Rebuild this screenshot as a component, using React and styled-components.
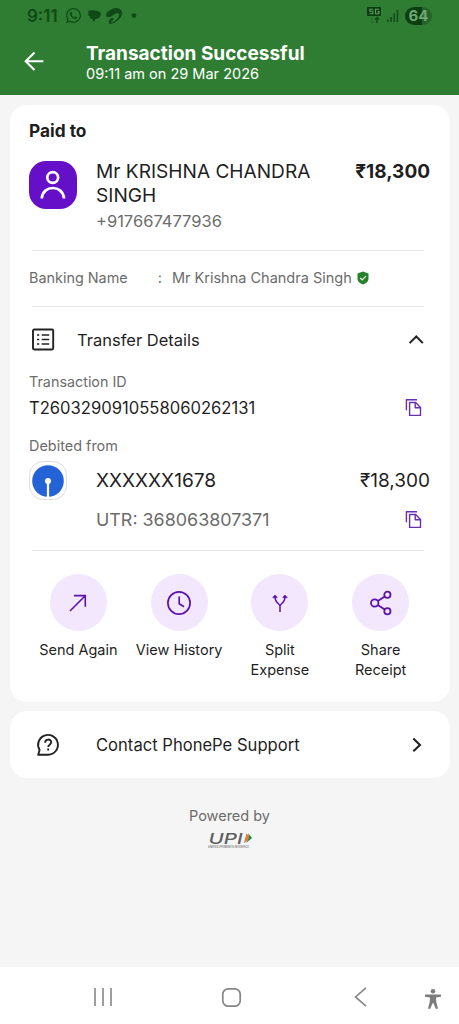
import React from "react";
import styled, { createGlobalStyle } from "styled-components";
import { FaWhatsapp } from "react-icons/fa";
import { SiAirtel } from "react-icons/si";

const GlobalStyle = createGlobalStyle`
  * { box-sizing: border-box; }
  body { margin: 0; background: #f5f5f5; font-family: Inter, "Noto Sans", sans-serif; color: #1f1f1f; }
  svg { display: block; flex: none; }
`;

const Screen = styled.div`
  display: flex;
  flex-direction: column;
  height: 1024px;
  width: 459px;
  overflow: hidden;
`;

const Header = styled.header`
  height: 95px;
  background: #2e7d32;
  color: #fff;
`;

const StatusBar = styled.div`
  height: 31px;
  display: flex;
  align-items: center;
  padding: 0 27px;
  color: #0f4a16;
`;

const StatusIcons = styled.div`
  display: flex;
  align-items: center;
  gap: 4px;
  margin-left: ${(p) => (p.$end ? "auto" : "7px")};
`;

const Battery = styled.div`
  width: 27px;
  height: 18px;
  margin-left: 2px;
  border-radius: 9px;
  background: linear-gradient(90deg, #0b3f10 62%, #23642a 62%);
  color: #6fa673;
  font-size: 15px;
  font-weight: 700;
  line-height: 18px;
  text-align: center;
`;

const AppBar = styled.div`
  display: flex;
  align-items: flex-start;
  padding: 11px 24px 0;
`;

const TitleBlock = styled.div`
  margin-left: 42px;
`;

const Text = styled.div`
  margin: 0;
  font-size: ${(p) => p.$size}px;
  font-weight: ${(p) => p.$weight || 400};
  line-height: ${(p) => p.$lh || 20}px;
  color: ${(p) => (p.$muted ? "#6c6c6c" : "inherit")};
  white-space: nowrap;
`;

const Main = styled.main`
  flex: 1;
  padding: 10px 9.5px;
`;

const Card = styled.section`
  background: #fff;
  border-radius: 17px;
  padding: 16px 19.5px 22px;
`;

const SupportCard = styled(Card)`
  height: 67px;
  margin-top: 9px;
  padding: 0 26.5px 0 25px;
  display: flex;
  align-items: center;
`;

const Row = styled.div`
  display: flex;
  align-items: ${(p) => p.$align || "center"};
  margin-top: ${(p) => p.$mt || 0}px;
  padding-right: ${(p) => p.$pr || 0}px;
`;

const Grow = styled.div`
  flex: 1;
  margin-left: ${(p) => p.$ml || 0}px;
`;

const Stack = styled.div`
  margin-top: ${(p) => p.$mt || 0}px;
`;

const Avatar = styled.div`
  width: 48px;
  height: 48px;
  margin-top: 2px;
  border-radius: 17px;
  background: #650fc8;
`;

const BankBadge = styled.div`
  width: 38px;
  height: 39px;
  border: 1px solid #dedede;
  border-radius: 14px;
  display: grid;
  place-items: center;
`;

const Divider = styled.hr`
  height: 1px;
  border: 0;
  margin: ${(p) => p.$mt}px 6px 0 3px;
  background: #e8e8e8;
`;

const Actions = styled.div`
  display: grid;
  grid-template-columns: repeat(4, 1fr);
  margin: 23px -1px 0;
`;

const Action = styled.div`
  display: flex;
  flex-direction: column;
  align-items: center;
  text-align: center;
`;

const ActionCircle = styled.div`
  width: 57px;
  height: 57px;
  margin-bottom: 9px;
  border-radius: 50%;
  background: #f2e7fc;
  display: grid;
  place-items: center;
`;

const Powered = styled.footer`
  margin-top: 28px;
  display: flex;
  flex-direction: column;
  align-items: center;
`;

const NavBar = styled.nav`
  height: 57px;
  background: #fff;
  display: flex;
  align-items: center;
  padding: 3px 17px 0 93px;
`;

const NavItem = styled.div`
  margin-left: ${(p) => p.$ml || 0}px;
  margin-top: ${(p) => p.$mt || 0}px;
`;

const PURPLE = "#5a14ad";
const NAV_GREY = "#868686";

const CopyIcon = () => (
  <svg width="18" height="20" viewBox="0 0 18 20" fill="none" stroke="#6a2fb0" strokeWidth="1.4" strokeLinejoin="round">
    <path d="M1.400 12.300V1.700H12" />
    <path d="M4.600 4.500h6l4.900 4.900v8H4.600z" />
    <path d="M10.200 4.500v5.200h5.200" />
  </svg>
);

const SendIcon = () => (
  <svg width="24" height="24" viewBox="0 0 24 24" fill="none" stroke={PURPLE} strokeWidth="1.6">
    <path d="M4 20L19.200 4.700M8 4.600h11.300v11.200" />
  </svg>
);

const ClockIcon = () => (
  <svg width="26" height="26" viewBox="0 0 26 26" fill="none" stroke={PURPLE} strokeWidth="1.7">
    <circle cx="13" cy="13" r="11.100" />
    <path d="M13.200 6.600v7.200l4.800 2.900" />
  </svg>
);

const SplitIcon = () => (
  <svg width="20" height="22" viewBox="0 0 20 22" fill="none" stroke={PURPLE} strokeWidth="1.5">
    <path d="M10 20v-6C9.800 11.500 5 11.500 5 4.500M10 14C10.200 11.500 15 11.500 15 4.500" />
    <path d="M2.800 5.600L5 3.100l2.200 2.500zM12.800 5.600L15 3.100l2.200 2.500z" fill={PURPLE} strokeWidth="0.8" />
  </svg>
);

const ShareIcon = () => (
  <svg width="24" height="26" viewBox="0 0 24 26" fill="none" stroke={PURPLE} strokeWidth="1.8">
    <circle cx="5.700" cy="13" r="3.700" />
    <circle cx="18.400" cy="4.800" r="3.100" />
    <circle cx="18.400" cy="21.200" r="3.100" />
    <path d="M8.800 11L15.800 6.500M8.800 15L15.800 19.500" />
  </svg>
);

const UpiLogo = () => (
  <svg width="46" height="28" viewBox="0 -6 46 28" fontFamily="Inter, sans-serif">
    <text x="1.500" y="11.500" fontSize="14.500" fontWeight="500" fontStyle="italic" fill="#5f5f5f" textLength="34" lengthAdjust="spacingAndGlyphs">UPI</text>
    <path d="M39.500 1.200L43.500 6 36.800 11.200z" fill="#e8793a" />
    <path d="M41.300 1.200L45 6 38.700 11.200 42 6z" fill="#1d8a45" />
    <text x="1" y="15.600" fontSize="2.800" fontWeight="600" fontStyle="italic" fill="#777" textLength="41" lengthAdjust="spacingAndGlyphs">UNIFIED PAYMENTS INTERFACE</text>
  </svg>
);

const ACTIONS = [
  { icon: <SendIcon />, lines: ["Send Again"] },
  { icon: <ClockIcon />, lines: ["View History"] },
  { icon: <SplitIcon />, lines: ["Split", "Expense"] },
  { icon: <ShareIcon />, lines: ["Share", "Receipt"] },
];

export default function App() {
  return (
    <Screen>
      <GlobalStyle />
      <Header>
        <StatusBar>
          <Text $size={17} $weight={600}>9:11</Text>
          <StatusIcons>
            <FaWhatsapp size={17} />
            <svg width="16" height="16" viewBox="0 0 16 16" fill="currentColor">
              <path d="M1.800 3C5 1.600 11.500 2 14.300 4.300c1.600 3-.8 6.300-4.800 6.700L8 14 6.300 11 3.800 10.300 4 8 1.500 7.300 2.800 5.500z" />
            </svg>
            <SiAirtel size={16} />
            <svg width="16" height="16" viewBox="0 0 16 16" fill="currentColor">
              <circle cx="8" cy="7.500" r="2.300" />
            </svg>
          </StatusIcons>
          <StatusIcons $end>
            <svg width="15" height="17" viewBox="0 0 15 17">
              <rect width="14" height="9" rx="1" fill="#0b3f10" />
              <path d="M6.200 2.200H2.800v2h3v2.500H2.500M12 2.200H8.500v4.500H12V4.600H10.500" stroke="#5d9a61" strokeWidth="1.100" fill="none" />
              <path d="M5 11v5M3.500 14.500L5 16l1.500-1.500" stroke="#236b2a" strokeWidth="1" fill="none" />
              <path d="M10 16v-5.500M8 12.500L10 10.500l2 2" stroke="#0f4a16" strokeWidth="1.400" fill="none" />
            </svg>
            <svg width="13" height="14" viewBox="0 0 13 14" fill="#124f19">
              <path d="M1 10.500h1.700V13H1zM4.200 8h1.700v5H4.200zM7.400 4.500h1.700V13H7.400zM10.600 1h1.700v12h-1.700z" />
            </svg>
            <Battery>64</Battery>
          </StatusIcons>
        </StatusBar>
        <AppBar>
          <svg width="20" height="38" viewBox="0 0 20 38" fill="none" stroke="#fff" strokeWidth="2.100">
            <path d="M19.300 19.300H2M10.500 10.500L1.700 19.300l8.800 8.800" />
          </svg>
          <TitleBlock>
            <Text as="h1" $size={19} $weight={700} $lh={23}>Transaction Successful</Text>
            <Text $size={14.5} $lh={17}>09:11 am on 29 Mar 2026</Text>
          </TitleBlock>
        </AppBar>
      </Header>

      <Main>
        <Card>
          <Text $size={17.3} $weight={700}>Paid to</Text>
          <Row $mt={18} $align="flex-start">
            <Avatar>
              <svg width="48" height="48" viewBox="0 0 48 48" fill="none" stroke="#fff" strokeWidth="2.700">
                <circle cx="23.700" cy="16.500" r="5.400" />
                <path d="M12.800 37.500C13.500 23.500 34 23.500 35 37.500" />
              </svg>
            </Avatar>
            <Grow $ml={19}>
              <Text $size={19.1} $lh={24}>Mr KRISHNA CHANDRA</Text>
              <Text $size={19.1} $lh={24}>SINGH</Text>
              <Stack $mt={2}>
                <Text $size={16.5} $lh={24} $muted>+917667477936</Text>
              </Stack>
            </Grow>
            <Text $size={19} $weight={700} $lh={25}>₹18,300</Text>
          </Row>
          <Divider $mt={17} />
          <Row $mt={17}>
            <Text $size={14.4} $muted>Banking Name</Text>
            <Grow $ml={30}>
              <Row>
                <Text $size={14.5} $muted>:</Text>
                <Grow $ml={10}>
                  <Row>
                    <Text $size={14.5} $muted>Mr Krishna Chandra Singh</Text>
                    <Grow $ml={5}>
                      <svg width="12" height="14" viewBox="0 0 12 14">
                        <path d="M6 .5L11.500 2.500v4.700C11.500 10.500 9 12.500 6 13.400 3 12.500.5 10.500.5 7.200V2.500z" fill="#25822b" />
                        <path d="M3.200 7l2 2 3.700-3.800" stroke="#e9f6ea" strokeWidth="1.200" fill="none" />
                      </svg>
                    </Grow>
                  </Row>
                </Grow>
              </Row>
            </Grow>
          </Row>
          <Divider $mt={18} />
          <Row $mt={21} $pr={6}>
            <svg width="28" height="24" viewBox="0 0 28 24" fill="none" stroke="#222" strokeWidth="1.900">
              <rect x="4" y="1.500" width="20.200" height="20" rx="1.200" />
              <path d="M8 7h2.200M8 11.500h2.200M8 16h2.200M12.700 7h7.500M12.700 11.500h7.500M12.700 16h7.500" strokeWidth="1.700" />
            </svg>
            <Grow $ml={20}>
              <Text $size={16.5} $lh={24}>Transfer Details</Text>
            </Grow>
            <svg width="16" height="10" viewBox="0 0 16 10" fill="none" stroke="#222" strokeWidth="2">
              <path d="M1.600 8.100L8.300 1.500l6.500 6.600" />
            </svg>
          </Row>
          <Stack $mt={20}>
            <Text $size={14.35} $muted>Transaction ID</Text>
          </Stack>
          <Row $mt={4} $pr={7}>
            <Grow>
              <Text $size={16.6} $lh={24}>T2603290910558060262131</Text>
            </Grow>
            <CopyIcon />
          </Row>
          <Stack $mt={16}>
            <Text $size={14.45} $muted>Debited from</Text>
          </Stack>
          <Row $mt={5}>
            <BankBadge>
              <svg width="32" height="32" viewBox="0 0 32 32">
                <circle cx="16" cy="16" r="15.800" fill="#2463d6" />
                <path d="M16 16v16" stroke="#fff" strokeWidth="2.200" />
                <circle cx="16" cy="16" r="3" fill="#fff" />
              </svg>
            </BankBadge>
            <Grow $ml={29}>
              <Text $size={19.1} $lh={25}>XXXXXX1678</Text>
            </Grow>
            <Text $size={19} $lh={25}>₹18,300</Text>
          </Row>
          <Row $mt={8} $pr={7}>
            <Grow $ml={67}>
              <Text $size={17.9} $lh={24} $muted>UTR: 368063807371</Text>
            </Grow>
            <CopyIcon />
          </Row>
          <Divider $mt={18} />
          <Actions>
            {ACTIONS.map((a) => (
              <Action key={a.lines[0]}>
                <ActionCircle>{a.icon}</ActionCircle>
                {a.lines.map((l) => (
                  <Text key={l} $size={14.5}>{l}</Text>
                ))}
              </Action>
            ))}
          </Actions>
        </Card>

        <SupportCard>
          <svg width="26" height="26" viewBox="0 0 26 26" fill="none" stroke="#222" strokeWidth="1.900">
            <path d="M3.200 22.700L4.600 18A9.900 9.900 0 1 1 13.200 22.700Z" strokeLinejoin="round" />
            <path d="M10.200 10.700C10.200 6.600 16.200 6.600 16.200 10.300 16.200 12.700 13.200 12.600 13.200 15M13.200 16.500v2.100" />
          </svg>
          <Grow $ml={35.5}>
            <Text $size={16.6} $lh={24}>Contact PhonePe Support</Text>
          </Grow>
          <svg width="12" height="16" viewBox="0 0 12 16" fill="none" stroke="#222" strokeWidth="2.100">
            <path d="M2.300 1.500L9 7.900l-6.700 6.400" />
          </svg>
        </SupportCard>

        <Powered>
          <Text $size={14.5} $muted>Powered by</Text>
          <UpiLogo />
        </Powered>
      </Main>

      <NavBar>
        <NavItem>
          <svg width="20" height="20" viewBox="0 0 20 20" stroke={NAV_GREY} strokeWidth="1.600">
            <path d="M2 1v18M10 1v18M18 1v18" />
          </svg>
        </NavItem>
        <NavItem $ml={108}>
          <svg width="21" height="21" viewBox="0 0 21 21" fill="none" stroke={NAV_GREY} strokeWidth="1.700">
            <rect x="1.800" y="1.800" width="17.400" height="17.400" rx="5.500" />
          </svg>
        </NavItem>
        <NavItem $ml={111}>
          <svg width="15" height="22" viewBox="0 0 15 22" fill="none" stroke={NAV_GREY} strokeWidth="1.600">
            <path d="M13 1.800L2.500 10.900 13 20.200" />
          </svg>
        </NavItem>
        <NavItem $ml={56} $mt={4}>
          <svg width="18" height="22" viewBox="0 0 18 22" fill="#7c7c7c">
            <circle cx="9" cy="3.200" r="2.300" />
            <path d="M1 6.600h16v2.200l-5 .8.300 4.400 1.700 6.400-2.100.6L9.300 15h-.6L6.100 21 4 20.400l1.700-6.400.3-4.400-5-.8z" />
          </svg>
        </NavItem>
      </NavBar>
    </Screen>
  );
}
